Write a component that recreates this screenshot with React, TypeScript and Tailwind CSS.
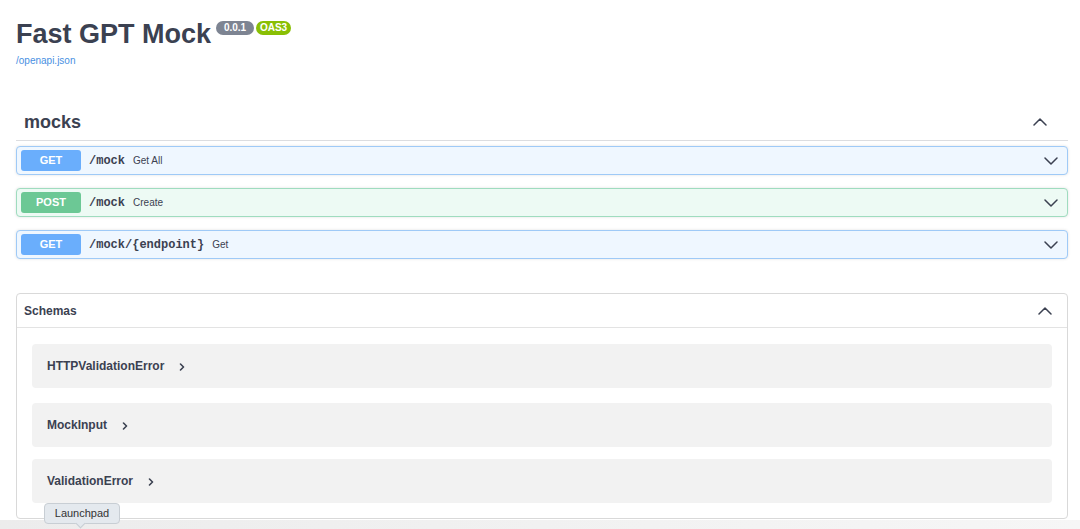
import React from "react";

type Op = { method: "GET" | "POST"; path: string; summary: string };

const ops: Op[] = [
  { method: "GET", path: "/mock", summary: "Get All" },
  { method: "POST", path: "/mock", summary: "Create" },
  { method: "GET", path: "/mock/{endpoint}", summary: "Get" },
];

const schemas = ["HTTPValidationError", "MockInput", "ValidationError"];

function Chevron({ up = false, className = "" }: { up?: boolean; className?: string }) {
  return (
    <svg width="14" height="8" viewBox="0 0 14 8" className={className} fill="none">
      <polyline
        points={up ? "1,7 7,1 13,7" : "1,1 7,7 13,1"}
        stroke="#3b4151"
        strokeWidth="1.5"
        strokeLinecap="round"
        strokeLinejoin="round"
      />
    </svg>
  );
}

function OpRow({ op }: { op: Op }) {
  const isGet = op.method === "GET";
  return (
    <div
      className={`flex items-center h-[29px] px-[4px] rounded-[4px] border shadow-[0_0_3px_rgba(0,0,0,0.12)] ${
        isGet ? "bg-[#eff7ff] border-[#9fcaf7]" : "bg-[#edfaf4] border-[#9fdcbf]"
      }`}
    >
      <span
        className={`w-[60px] h-[21px] rounded-[3px] flex items-center justify-center text-white text-[11px] font-bold ${
          isGet ? "bg-[#6aaefc]" : "bg-[#6cc895]"
        }`}
      >
        {op.method}
      </span>
      <span className="ml-[8px] font-['Liberation_Mono',monospace] font-bold text-[12px]">{op.path}</span>
      <span className="ml-[8px] text-[10px]">{op.summary}</span>
      <Chevron className="ml-auto mr-[5px]" />
    </div>
  );
}

export default function App() {
  return (
    <div className="relative min-h-screen overflow-hidden bg-white text-[#3b4151] font-['Liberation_Sans',Arial,sans-serif]">
      <div className="pl-4 pr-[12px] pt-[18px]">
        <div className="flex items-start">
          <h2 className="text-[27px] leading-[32px] font-bold">Fast GPT Mock</h2>
          <span className="ml-[5px] mt-[3px] w-[38px] h-[14px] rounded-full bg-[#7d8492] text-white text-[10px] leading-[14px] font-bold text-center">
            0.0.1
          </span>
          <span className="ml-[2px] mt-[3px] w-[35px] h-[14px] rounded-full bg-[#89bf04] text-white text-[10px] leading-[14px] font-bold text-center">
            OAS3
          </span>
        </div>
        <a className="block mt-[4px] text-[10px] leading-[14px] text-[#4990e2]">/openapi.json</a>

        <div className="mt-[42px] flex items-center justify-between border-b border-[#dcdde0] pl-2 pr-[21px] pb-[6px]">
          <h3 className="text-[18px] leading-[24px] font-bold">mocks</h3>
          <Chevron up />
        </div>

        <div className="mt-[5px]">
          {ops.map((op, i) => (
            <div key={i} className={i > 0 ? "mt-[13px]" : ""}>
              <OpRow op={op} />
            </div>
          ))}
        </div>

        <div className="mt-[34px] rounded-[4px] border border-[#d9d9d9]">
          <div className="h-[34px] flex items-center justify-between pl-[7px] pr-[15px] border-b border-[#e3e3e3]">
            <span className="text-[12px] font-bold">Schemas</span>
            <Chevron up />
          </div>
          <div className="px-[15px] pt-[16px] pb-[15px]">
            {schemas.map((name, i) => (
              <div
                key={name}
                className={`h-[44px] rounded-[4px] bg-[#f2f2f2] flex items-center pl-[15px] ${
                  i === 1 ? "mt-[15px]" : i === 2 ? "mt-[12px]" : ""
                }`}
              >
                <span className="text-[12px] font-bold">{name}</span>
                <svg width="6" height="8" viewBox="0 0 6 8" className="ml-[15px] mt-[1px]" fill="none">
                  <polyline points="1.5,1 4.5,4 1.5,7" stroke="#3b4151" strokeWidth="1.6" strokeLinecap="round" strokeLinejoin="round" />
                </svg>
              </div>
            ))}
          </div>
        </div>
      </div>

      <div className="absolute left-0 right-0 bottom-0 h-[9px] bg-gradient-to-r from-[#ececec] to-[#f6f6f6]" />

      <div className="absolute left-[44px] top-[503px] w-[76px] h-[21px] rounded-[4px] border border-[#c8ced4] bg-[#e4e9ee] flex items-center justify-center text-[11px] text-[#333]">
        Launchpad
        <div className="absolute left-[32px] bottom-[-4px] w-[7px] h-[7px] rotate-45 bg-[#e4e9ee] border-r border-b border-[#c8ced4]" />
      </div>
    </div>
  );
}
